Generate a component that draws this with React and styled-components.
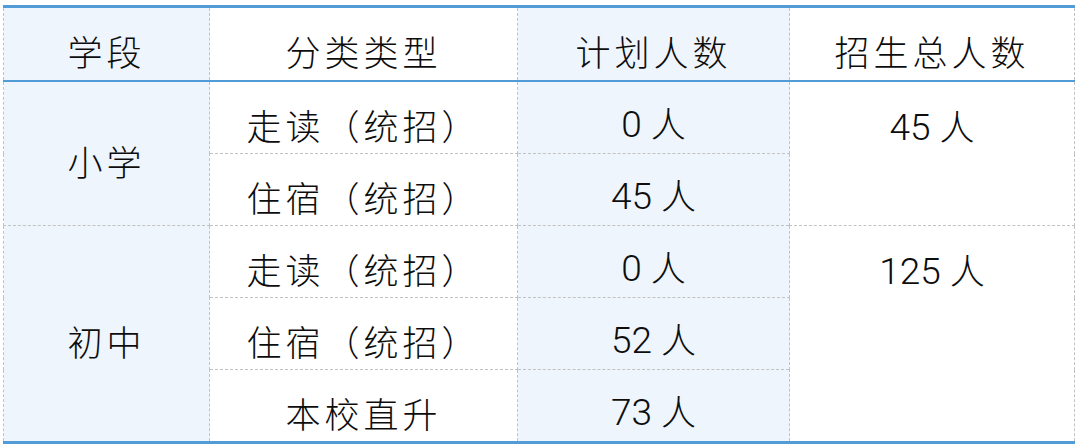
import React from "react";
import styled, { createGlobalStyle } from "styled-components";

const GlobalStyle = createGlobalStyle`
  html, body {
    margin: 0;
    padding: 0;
    background: #fff;
  }
  body {
    font-family: "Noto Sans CJK SC", sans-serif;
    color: #0d0d0d;
  }
`;

const BLUE = "#519bd6";
const TINT = "#eef5fc";
const DASH = "1px dashed #c2c2c2";

const Page = styled.div`
  padding: 5px 6px 0 3px;
`;

const Table = styled.table`
  width: 1071px;
  border-collapse: collapse;
  table-layout: fixed;
  border-top: 3px solid ${BLUE};
  border-bottom: 3px solid ${BLUE};
`;

const Col = styled.col`
  width: ${(p) => p.$w}px;
  background: ${(p) => (p.$tint ? TINT : "#fff")};
`;

const HeadCell = styled.th`
  height: 58px;
  padding: 14px 0 0;
  font-weight: 300;
  font-size: 35px;
  letter-spacing: 4px;
  text-align: center;
  vertical-align: middle;
  border-left: ${DASH};
  border-right: ${DASH};
  border-bottom: 2px solid ${BLUE};
  line-height: 1.2;
`;

const Cell = styled.td`
  height: ${(p) => (p.$top ? 0 : 57)}px;
  padding: ${(p) => (p.$top ? "22px 0 0" : "14px 0 0")};
  font-size: 35px;
  font-weight: 300;
  letter-spacing: 4px;
  text-align: center;
  vertical-align: ${(p) => (p.$top ? "top" : "middle")};
  border: ${DASH};
  line-height: 1.2;
`;

const Num = styled.span`
  font-family: "Roboto", "Liberation Sans", sans-serif;
  font-weight: 300;
  font-size: 37px;
  letter-spacing: 0;
`;

const Unit = styled.span`
  font-family: "Noto Sans CJK SC", sans-serif;
  font-weight: 300;
  font-size: 35px;
  letter-spacing: 0;
`;

const Count = ({ n }) => (
  <>
    <Num>{n} </Num>
    <Unit>人</Unit>
  </>
);

const rows = [
  { stage: "小学", span: 2, total: 45, type: "走读（统招）", plan: 0 },
  { type: "住宿（统招）", plan: 45 },
  { stage: "初中", span: 3, total: 125, type: "走读（统招）", plan: 0 },
  { type: "住宿（统招）", plan: 52 },
  { type: "本校直升", plan: 73 },
];

export default function App() {
  return (
    <Page>
      <GlobalStyle />
      <Table>
        <colgroup>
          <Col $w={206} $tint />
          <Col $w={308} />
          <Col $w={272} $tint />
          <Col $w={285} />
        </colgroup>
        <thead>
          <tr>
            <HeadCell>学段</HeadCell>
            <HeadCell>分类类型</HeadCell>
            <HeadCell>计划人数</HeadCell>
            <HeadCell>招生总人数</HeadCell>
          </tr>
        </thead>
        <tbody>
          {rows.map((r, i) => (
            <tr key={i}>
              {r.stage && <Cell rowSpan={r.span}>{r.stage}</Cell>}
              <Cell>{r.type}</Cell>
              <Cell>
                <Count n={r.plan} />
              </Cell>
              {r.stage && (
                <Cell rowSpan={r.span} $top>
                  <Count n={r.total} />
                </Cell>
              )}
            </tr>
          ))}
        </tbody>
      </Table>
    </Page>
  );
}
